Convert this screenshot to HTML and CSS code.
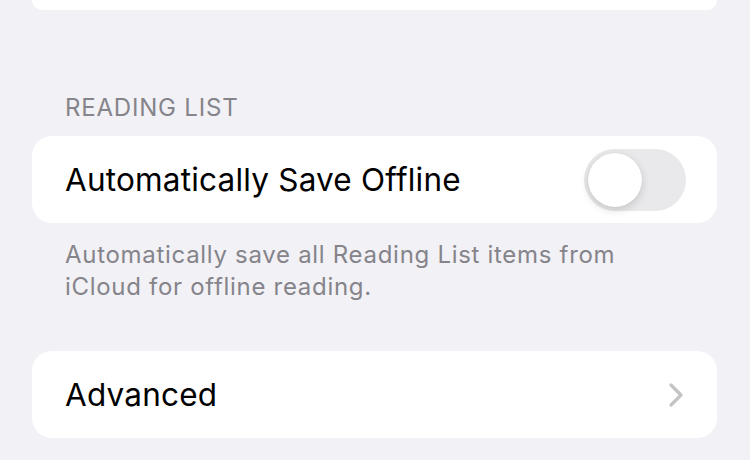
FILE: index.html
```html
<!DOCTYPE html>
<html>
<head>
<meta charset="utf-8">
<link rel="stylesheet" href="styles.css">
</head>
<body>
<div class="page">
  <div class="card card-top"></div>
  <div class="section-header">READING LIST</div>
  <div class="card row">
    <span class="label">Automatically Save Offline</span>
    <span class="toggle"><span class="knob"></span></span>
  </div>
  <div class="section-footer">Automatically save all Reading List items from iCloud for offline reading.</div>
  <div class="card row">
    <span class="label">Advanced</span>
    <svg class="chevron" width="16" height="26" viewBox="0 0 16 26">
      <path d="M3 3 L13 13 L3 23" fill="none" stroke="#c4c4c7" stroke-width="3.2" stroke-linecap="round" stroke-linejoin="round"/>
    </svg>
  </div>
</div>
</body>
</html>
```
FILE: styles.css
```css
html, body {
  margin: 0;
  padding: 0;
  background: #f2f1f6;
}
body {
  width: 750px;
  height: 460px;
  overflow: hidden;
  font-family: Inter, "Liberation Sans", sans-serif;
}
.page {
  display: flex;
  flex-direction: column;
  padding: 0 33px 0 32px;
}
.card {
  background: #ffffff;
  border-radius: 20px;
}
.card-top {
  height: 10px;
  border-radius: 0 0 20px 20px;
}
.section-header {
  margin-top: 84px;
  padding-left: 33px;
  font-size: 24px;
  line-height: 28px;
  color: #85848a;
  letter-spacing: 0.8px;
}
.row {
  margin-top: 14px;
  height: 87px;
  display: flex;
  align-items: center;
  justify-content: space-between;
  padding: 0 32px 0 33px;
}
.label {
  font-size: 31.5px;
  color: #000;
  letter-spacing: 0.2px;
}
.toggle {
  width: 102px;
  height: 62px;
  border-radius: 31px;
  background: #e9e9eb;
  display: flex;
  align-items: center;
  padding-left: 4px;
  box-sizing: border-box;
  margin-right: -1px;
}
.knob {
  width: 54px;
  height: 54px;
  border-radius: 50%;
  background: #fff;
  box-shadow: 0 3px 8px rgba(0,0,0,0.15), 0 0 1px rgba(0,0,0,0.12);
}
.section-footer {
  margin-top: 16px;
  padding: 0 60px 0 33px;
  font-size: 24px;
  line-height: 32px;
  color: #85848a;
  letter-spacing: 0.7px;
}
.section-footer + .row {
  margin-top: 48px;
}
.chevron {
  margin-right: 1px;
}
```
